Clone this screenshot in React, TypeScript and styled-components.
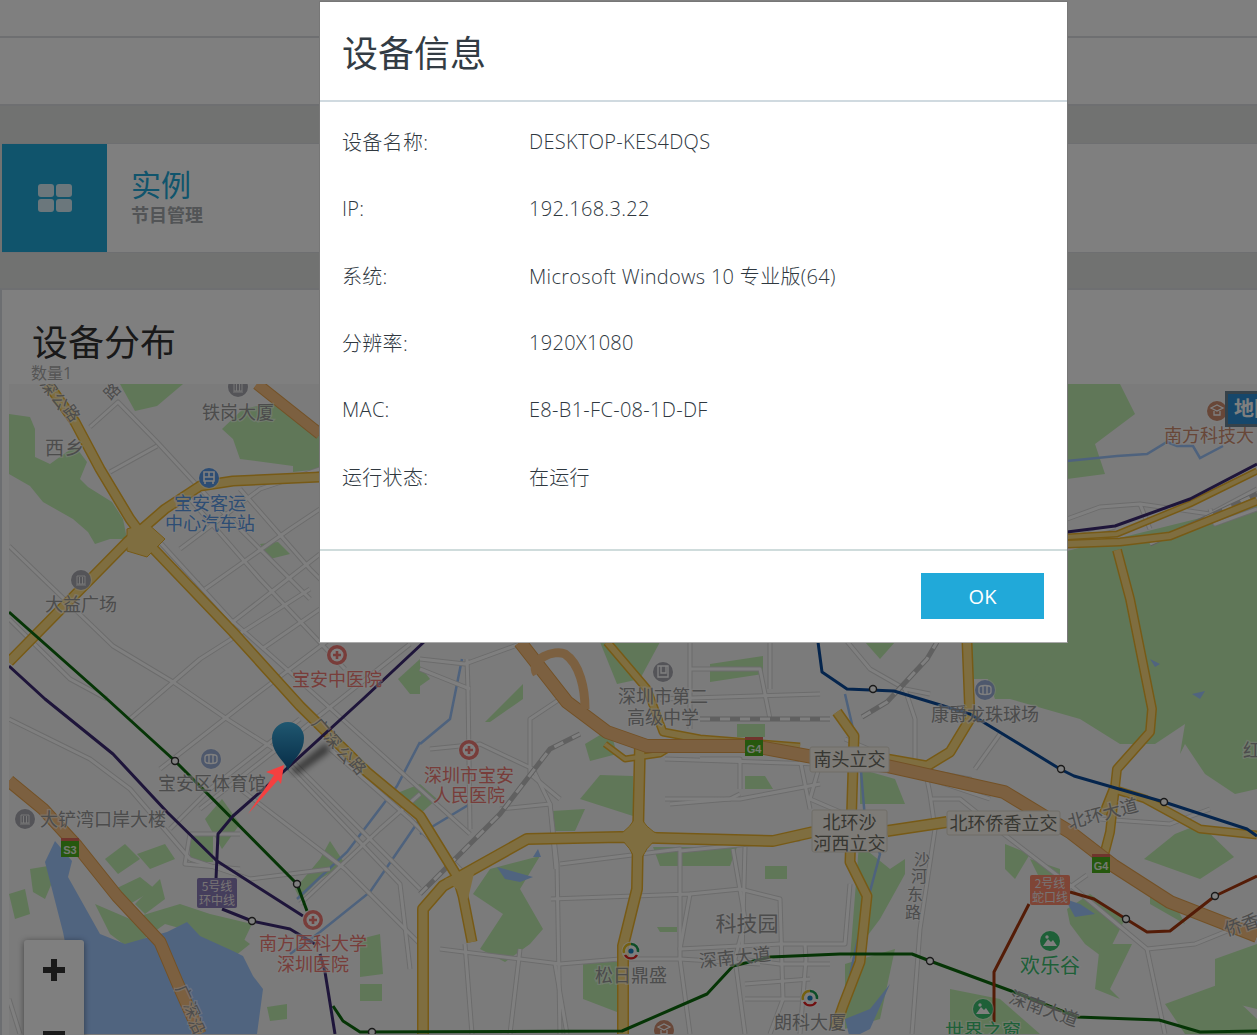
import React from "react";
import styled, { createGlobalStyle } from "styled-components";

const CJK = `"Open Sans", "Noto Sans CJK SC", sans-serif`;

const Global = createGlobalStyle`
  html, body { margin: 0; height: 1035px; overflow: hidden; background: #fff; }
  body { font-family: ${CJK}; }
`;

const Page = styled.div`
  height: 1035px;
  overflow: hidden;
  display: flex;
  flex-direction: column;
  background: #e2e5e3;
`;
const TopBar = styled.div`
  height: 36px;
  flex: none;
  background: #fff;
  border-bottom: 2px solid #dcdfe3;
`;
const NavBar = styled.div`
  height: 66px;
  flex: none;
  background: #fff;
  border-bottom: 2px solid #dcdfe3;
`;
const Band = styled.div`
  flex: none;
  padding: 37px 0;
`;
const SummaryCard = styled.div`
  margin-left: 2px;
  height: 108px;
  display: flex;
  background: #fff;
  border-top: 1px solid #dcdfe3;
  border-bottom: 1px solid #dcdfe3;
`;
const Tile = styled.div`
  width: 105px;
  flex: none;
  background: #21a9d9;
  display: flex;
  align-items: center;
  justify-content: center;
`;
const SummaryText = styled.div`
  padding: 22px 0 0 24px;
`;
const SummaryTitle = styled.div`
  font-size: 30px;
  line-height: 38px;
  color: #21a9d9;
`;
const SummarySub = styled.div`
  font-size: 18px;
  line-height: 22px;
  font-weight: 700;
  color: #a4a8ac;
`;
const Panel = styled.div`
  flex: 1;
  min-height: 0;
  margin-top: -2px;
  display: flex;
  flex-direction: column;
  background: #fff;
  border-top: 2px solid #dcdfe3;
  border-left: 2px solid #d8dde2;
`;
const PanelHead = styled.div`
  height: 94px;
  flex: none;
  padding: 33px 0 0 30px;
  box-sizing: border-box;
`;
const PanelTitle = styled.div`
  font-size: 36px;
  line-height: 40px;
  color: #333;
`;
const PanelSub = styled.div`
  font-size: 16px;
  line-height: 20px;
  margin-left: -1px;
  color: #aaa;
`;
const MapWrap = styled.div`
  position: relative;
  margin-left: 7px;
  flex: 1;
  overflow: hidden;
  background: #f6f6f6;
`;
const MapSvg = styled.svg`
  display: block;
  width: 1248px;
  height: 650px;
  font-family: "Noto Sans CJK SC", sans-serif;
`;
const ZoomControl = styled.div`
  position: absolute;
  left: 15px;
  top: 556px;
  width: 60px;
  height: 124px;
  display: flex;
  flex-direction: column;
  gap: 4px;
  background: #fff;
  border-radius: 3px;
  box-shadow: 0 1px 6px rgba(0, 0, 0, 0.45);
`;
const ZoomBtn = styled.div`
  height: 60px;
  display: flex;
  align-items: center;
  justify-content: center;
`;
const MapTag = styled.div`
  position: absolute;
  left: 1216px;
  top: 7px;
  width: 60px;
  height: 30px;
  box-sizing: content-box;
  border: 3px solid #6d8494;
  background: #2d8fd6;
  color: #fff;
  font-size: 20px;
  line-height: 30px;
  font-weight: 700;
  padding-left: 6px;
  white-space: nowrap;
`;
const Backdrop = styled.div`
  position: fixed;
  inset: 0;
  background: rgba(0, 0, 0, 0.5);
`;
const Annotation = styled.svg`
  position: fixed;
  left: 240px;
  top: 760px;
  width: 50px;
  height: 60px;
`;
const Modal = styled.div`
  position: fixed;
  left: 319px;
  top: 1px;
  width: 749px;
  height: 642px;
  box-sizing: border-box;
  background: #fff;
  border: 1px solid #777;
  border-bottom-color: #aaa;
  display: flex;
  flex-direction: column;
`;
const ModalHeader = styled.div`
  height: 98px;
  flex: none;
  padding: 0 22px;
  display: flex;
  align-items: center;
  border-bottom: 2px solid #d0dae0;
`;
const ModalTitle = styled.h3`
  margin: 0;
  font-size: 36px;
  font-weight: 400;
  color: #333c44;
`;
const ModalBody = styled.div`
  padding: 6px 22px 39px;
  border-bottom: 2px solid #cfdcdc;
`;
const InfoRow = styled.div`
  height: 67px;
  display: grid;
  grid-template-columns: 187px 1fr;
  align-items: center;
  font-size: 20px;
  font-weight: 300;
  letter-spacing: 0.3px;
  color: #2f383f;
`;
const ModalFooter = styled.div`
  padding: 22px 23px 0;
  display: flex;
  justify-content: flex-end;
`;
const OkButton = styled.button`
  width: 123px;
  height: 46px;
  border: 0;
  background: #21a9d9;
  color: #fff;
  font-family: inherit;
  font-size: 20px;
`;

type P = [number, number][];
const d = (p: P) => "M" + p.map((q) => q.join(" ")).join("L");

const greens: P[] = [
  [[9,415],[30,418],[35,430],[35,458],[50,465],[75,447],[87,463],[80,480],[88,488],[112,503],[123,520],[127,540],[110,540],[95,545],[88,533],[73,520],[43,503],[30,487],[9,475]],
  [[120,385],[183,385],[157,407],[135,412]],
  [[222,430],[243,410],[277,403],[320,430],[320,470],[293,473],[293,467],[240,460],[233,440]],
  [[260,545],[278,543],[290,555],[270,560]],
  [[193,585],[200,582],[198,590]],
  [[398,680],[420,660],[420,695],[410,695]],
  [[420,667],[430,680],[420,687]],
  [[485,723],[523,685],[523,700],[490,723]],
  [[180,930],[230,930],[250,945],[225,965],[200,948]],
  [[205,820],[222,800],[240,825],[222,850]],
  [[190,863],[213,863],[213,835],[190,835]],
  [[137,855],[165,845],[175,860],[150,870]],
  [[105,860],[125,845],[140,860],[118,875]],
  [[115,890],[140,878],[155,890],[130,905]],
  [[135,905],[160,880],[165,900],[145,915]],
  [[30,870],[60,865],[45,900],[33,893]],
  [[9,895],[25,890],[30,915],[15,920]],
  [[95,905],[130,920],[180,905],[210,915],[252,925],[240,950],[200,935],[165,925],[130,950],[110,935]],
  [[295,890],[320,860],[330,842],[345,865],[320,880],[300,900]],
  [[360,940],[380,935],[383,975],[360,978]],
  [[360,985],[382,985],[382,1002],[360,1002]],
  [[267,1008],[287,1005],[287,1020],[270,1022]],
  [[395,795],[420,785],[437,800],[420,815]],
  [[580,800],[600,776],[633,777],[633,817]],
  [[552,812],[585,810],[575,832],[552,832]],
  [[473,895],[490,870],[540,857],[520,890],[543,930],[530,945],[505,963],[480,950],[503,915]],
  [[583,963],[617,963],[617,1013],[583,1000]],
  [[585,745],[610,730],[617,755],[590,762]],
  [[600,643],[660,643],[640,680],[617,685]],
  [[710,665],[763,657],[763,675],[710,683]],
  [[737,725],[765,725],[765,738],[737,738]],
  [[745,777],[765,777],[773,790],[745,790]],
  [[765,867],[787,867],[787,880],[765,880]],
  [[653,848],[737,848],[730,867],[660,867]],
  [[657,928],[677,928],[677,933],[660,933]],
  [[865,643],[895,643],[880,660]],
  [[859,845],[890,870],[905,860],[905,875],[880,920],[850,960]],
  [[845,965],[895,950],[880,1020],[845,1030]],
  [[860,770],[895,780],[905,805],[860,805]],
  [[970,643],[1257,643],[1257,790],[1235,795],[1205,775],[1185,745],[1180,755],[1185,725],[1155,745],[1120,745],[1080,720],[1010,700],[990,680],[970,680]],
  [[975,645],[1060,643],[1020,700],[995,700]],
  [[1144,860],[1175,835],[1200,825],[1234,858],[1200,880]],
  [[1067,552],[1257,505],[1257,645],[1067,645]],
  [[1067,385],[1120,385],[1135,415],[1095,445],[1105,475],[1067,480]],
  [[1005,845],[1030,855],[1015,880],[1005,870]],
  [[1030,860],[1060,870],[1060,895],[1040,880]],
  [[1067,910],[1090,895],[1125,920],[1105,960],[1085,945],[1070,925]],
  [[1100,945],[1132,945],[1110,990],[1120,1000],[1095,990]],
  [[950,990],[1000,1000],[1040,1035],[950,1035]],
  [[1215,960],[1257,945],[1257,1010],[1215,1000]],
  [[1165,1005],[1220,985],[1257,1020],[1257,1035],[1185,1035]],
  [[1150,890],[1170,895],[1185,925],[1150,905]],
];

const waters: P[] = [
  [[45,863],[55,842],[72,862],[68,878],[100,935],[125,945],[167,933],[187,923],[200,937],[233,952],[243,957],[253,977],[263,990],[257,1035],[83,1035],[63,933]],
  [[870,1010],[890,985],[870,1030],[850,1040],[845,1020]],
  [[1065,900],[1080,905],[1095,915],[1075,918]],
  [[1150,660],[1160,665],[1155,668]],
  [[1192,695],[1205,692],[1200,700]],
  [[497,868],[533,878],[520,883],[505,880]],
  [[533,858],[538,850],[541,858]],
];

const rivers: P[] = [
  [[420,743],[397,787],[347,853],[297,900]],
  [[420,820],[370,893],[320,933],[290,955]],
  [[462,660],[450,720],[420,745]],
  [[420,835],[470,805]],
  [[845,695],[860,760],[865,820],[880,855],[860,930],[845,1000]],
  [[1067,462],[1117,457],[1147,455],[1167,443],[1177,447],[1193,447],[1200,459],[1223,447]],
];

const streets: P[] = [
  [[90,428],[118,403],[157,443],[207,497],[265,555],[310,600]],
  [[110,473],[157,447]],
  [[9,547],[113,647],[173,683],[227,720],[290,760],[340,810],[420,890]],
  [[9,620],[70,680],[107,700]],
  [[157,540],[230,620],[320,700],[420,790],[470,835]],
  [[190,500],[260,580],[345,670]],
  [[240,490],[310,570],[330,590]],
  [[180,550],[260,490],[320,470]],
  [[205,590],[290,530],[320,510]],
  [[230,625],[320,555]],
  [[262,650],[320,610]],
  [[130,720],[200,660],[310,590]],
  [[160,770],[250,700],[330,640]],
  [[200,810],[290,740],[410,645]],
  [[170,830],[210,790],[300,720]],
  [[9,720],[90,760],[130,790],[190,860],[250,880],[330,870]],
  [[240,790],[345,870],[420,945]],
  [[290,770],[400,885],[410,970]],
  [[330,750],[410,820],[470,880]],
  [[190,835],[185,865],[240,870]],
  [[190,835],[240,835]],
  [[300,905],[380,830],[420,795]],
  [[420,660],[465,665],[520,645]],
  [[467,660],[468,690],[470,830]],
  [[430,750],[480,745],[533,770],[550,805],[557,865],[560,1035]],
  [[560,700],[530,720],[530,775],[560,800]],
  [[420,670],[470,690]],
  [[500,810],[550,805],[556,870]],
  [[560,865],[680,850],[680,885],[680,960],[690,1035]],
  [[551,900],[690,895],[680,950],[780,945],[845,945],[850,885]],
  [[440,950],[560,965],[620,960],[680,960],[760,965]],
  [[465,945],[472,1035]],
  [[520,950],[510,1035]],
  [[555,965],[567,1035]],
  [[733,850],[745,920],[735,960],[745,1035]],
  [[680,852],[800,840]],
  [[745,848],[742,955]],
  [[690,895],[740,890],[780,900],[783,1000],[770,1035]],
  [[805,945],[806,960],[800,1035]],
  [[740,960],[780,965],[830,965]],
  [[745,985],[810,980]],
  [[745,1000],[800,1000]],
  [[660,700],[820,695]],
  [[690,640],[690,730]],
  [[690,670],[760,670],[770,720]],
  [[770,640],[770,690]],
  [[700,760],[740,760],[740,790]],
  [[665,760],[820,765],[810,800],[880,830]],
  [[665,800],[740,800],[820,785]],
  [[670,805],[730,800],[740,795]],
  [[800,760],[810,810]],
  [[845,640],[870,670],[905,690],[930,695]],
  [[905,690],[915,720],[915,775],[990,800]],
  [[845,740],[915,770],[970,780],[970,790],[1000,790]],
  [[925,770],[930,795],[935,830],[920,930],[912,1035]],
  [[930,800],[960,800],[1010,840],[1075,890],[1147,950],[1195,945],[1257,920]],
  [[1147,950],[1165,1035]],
  [[1087,876],[1060,895]],
  [[975,770],[1000,735]],
  [[1100,820],[1170,825],[1210,810]],
  [[1067,540],[1115,528]],
  [[1067,520],[1100,508],[1140,505],[1210,515],[1257,490]],
  [[1140,505],[1150,530]],
  [[1210,510],[1215,525],[1257,510]],
  [[9,1000],[20,1035]],
];

const railSegs: P[] = [
  [[420,895],[500,815],[550,750],[580,735]],
  [[700,720],[830,720]],
  [[862,718],[887,703],[927,660],[937,643]],
  [[1150,545],[1257,495]],
];

const highways: { p: P; w: number }[] = [
  { p: [[48,385],[75,423],[100,470],[130,520],[147,543],[233,633],[300,707],[367,773],[420,817],[457,877],[463,897],[472,943]], w: 8 },
  { p: [[9,663],[127,543],[165,510],[200,487],[233,482],[320,478]], w: 8 },
  { p: [[423,1035],[423,910],[443,887],[527,840],[620,838],[773,842],[813,833]], w: 9 },
  { p: [[887,832],[947,823]], w: 9 },
  { p: [[640,745],[638,837],[637,890],[623,947],[623,1035]], w: 9 },
  { p: [[607,643],[647,690],[663,733],[700,740],[800,748]], w: 6 },
  { p: [[967,643],[970,720],[950,753],[927,767],[887,760]], w: 8 },
  { p: [[837,713],[854,737],[850,863],[867,897],[860,963],[843,1007],[835,1030]], w: 8 },
  { p: [[1117,551],[1130,600],[1152,710],[1150,733],[1117,770],[1110,833],[1103,860]], w: 7 },
  { p: [[1103,815],[1113,790],[1145,800],[1200,830],[1257,836]], w: 6 },
  { p: [[1067,545],[1120,543],[1170,537],[1257,502]], w: 6 },
  { p: [[1067,538],[1117,535],[1190,505],[1257,472]], w: 4 },
  { p: [[1100,862],[1160,900],[1170,905]], w: 3 },
  { p: [[605,745],[625,760],[660,755],[668,750]], w: 4 },
];
const expressways: { p: P; w: number }[] = [
  { p: [[257,385],[320,435]], w: 10 },
  { p: [[9,782],[43,810],[77,847],[117,897],[160,943],[177,983],[200,1035]], w: 11 },
  { p: [[520,643],[567,703],[607,733],[647,747],[753,747],[813,758],[887,767],[1004,793],[1070,833],[1114,867],[1170,903],[1257,937]], w: 12 },
];

const lines: { p: P; c: string; w: number }[] = [
  { p: [[9,613],[107,700],[175,762],[297,885],[307,912]], c: "#0c6b0c", w: 3 },
  { p: [[333,1007],[343,1022],[360,1033],[622,1032],[707,995],[733,967],[770,958],[840,955],[912,955],[930,962],[1014,993],[1077,1018],[1159,1021],[1200,1033],[1257,1032]], c: "#0c6b0c", w: 3 },
  { p: [[9,667],[45,700],[113,755],[167,813],[217,862],[303,917]], c: "#3d2a74", w: 3 },
  { p: [[320,955],[325,973],[335,1035]], c: "#3d2a74", w: 3 },
  { p: [[425,642],[363,700],[283,773],[233,817],[218,835],[216,880]], c: "#3d2a74", w: 3 },
  { p: [[222,910],[252,922],[290,930],[315,945]], c: "#3d2a74", w: 3 },
  { p: [[1067,533],[1115,527],[1190,500],[1257,465]], c: "#3d2a74", w: 3 },
  { p: [[818,643],[822,673],[847,690],[894,692],[970,715],[1060,770],[1074,777],[1164,803],[1247,830],[1257,837]], c: "#0a4a9a", w: 3 },
  { p: [[1257,877],[1215,897],[1170,932],[1147,933],[1126,920],[1094,900],[1070,893]], c: "#a8380e", w: 3 },
  { p: [[1029,905],[994,973],[994,1023]], c: "#a8380e", w: 3 },
];

const stations: P = [[175,762],[297,885],[252,922],[372,1033],[930,962],[873,690],[1061,770],[1164,803],[1215,897],[1126,920]];

type Label = { t: string; x: number; y: number; c?: string; s?: number; r?: number; ls?: number };
const GRAY = "#989898";
const BLUE = "#5b9be8";
const RED = "#f07a74";
const GREEN = "#3cc070";
const BROWN = "#d08e70";
const labels: Label[] = [
  { t: "铁岗大厦", x: 238, y: 420 },
  { t: "西乡", x: 65, y: 456, s: 19, ls: 1 },
  { t: "宝安客运", x: 210, y: 511, c: BLUE },
  { t: "中心汽车站", x: 210, y: 531, c: BLUE },
  { t: "大益广场", x: 81, y: 612 },
  { t: "宝安中医院", x: 337, y: 687, c: RED },
  { t: "宝安区体育馆", x: 212, y: 791 },
  { t: "大铲湾口岸大楼", x: 103, y: 827 },
  { t: "南方医科大学", x: 313, y: 951, c: RED },
  { t: "深圳医院", x: 313, y: 972, c: RED },
  { t: "深圳市第二", x: 663, y: 704 },
  { t: "高级中学", x: 663, y: 725 },
  { t: "深圳市宝安", x: 469, y: 783, c: RED },
  { t: "人民医院", x: 469, y: 803, c: RED },
  { t: "康爵龙珠球场", x: 985, y: 722 },
  { t: "科技园", x: 747, y: 932, s: 21 },
  { t: "松日鼎盛", x: 631, y: 983 },
  { t: "朗科大厦", x: 810, y: 1030 },
  { t: "欢乐谷", x: 1050, y: 974, c: GREEN, s: 20 },
  { t: "世界之窗", x: 983, y: 1039, c: GREEN, s: 19 },
  { t: "南方科技大", x: 1209, y: 443, c: BROWN },
  { t: "红", x: 1252, y: 758 },
  { t: "沙", x: 922, y: 866, s: 16 },
  { t: "河", x: 919, y: 883, s: 16 },
  { t: "东", x: 915, y: 901, s: 16 },
  { t: "路", x: 913, y: 919, s: 16 },
  { t: "公", x: 60, y: 408, s: 16, r: 55 },
  { t: "路", x: 72, y: 420, s: 16, r: 55 },
  { t: "深", x: 49, y: 394, s: 16, r: 55 },
  { t: "路", x: 112, y: 398, s: 16, r: -45 },
  { t: "广", x: 321, y: 733, s: 16, r: 50 },
  { t: "深", x: 333, y: 747, s: 16, r: 50 },
  { t: "公", x: 345, y: 762, s: 16, r: 50 },
  { t: "路", x: 358, y: 773, s: 16, r: 50 },
  { t: "广", x: 184, y: 1000, s: 16, r: 65 },
  { t: "深", x: 192, y: 1017, s: 16, r: 65 },
  { t: "沿", x: 197, y: 1033, s: 16, r: 65 },
  { t: "深南大道", x: 735, y: 965, r: -6 },
  { t: "北环大道", x: 1103, y: 821, r: -15, s: 18 },
  { t: "深南大道", x: 1044, y: 1016, r: 20 },
  { t: "侨香", x: 1242, y: 932, r: -18 },
];

const boxes: { x: number; y: number; w: number; h: number; rows: string[] }[] = [
  { x: 810, y: 748, w: 79, h: 25, rows: ["南头立交"] },
  { x: 812, y: 811, w: 75, h: 42, rows: ["北环沙", "河西立交"] },
  { x: 947, y: 812, w: 113, h: 24, rows: ["北环侨香立交"] },
];

const Road = ({ list, casing, fill, w }: { list: P[]; casing: string; fill: string; w: number }) => (
  <>
    {list.map((p, i) => (
      <path key={`c${i}`} d={d(p)} fill="none" stroke={casing} strokeWidth={w + 2} strokeLinejoin="round" />
    ))}
    {list.map((p, i) => (
      <path key={`f${i}`} d={d(p)} fill="none" stroke={fill} strokeWidth={w} strokeLinejoin="round" />
    ))}
  </>
);

const Shield = ({ x, y, t }: { x: number; y: number; t: string }) => (
  <g>
    <rect x={x - 9} y={y - 8} width={18} height={16} fill="#4cb01c" />
    <rect x={x - 9} y={y - 11} width={18} height={3} fill="#e06a5a" />
    <text x={x} y={y + 5} fontSize={11} fontWeight={700} textAnchor="middle" fill="#e8f4e0" fontFamily="Liberation Sans, sans-serif">{t}</text>
  </g>
);

const Badge = ({ x, y, bg, rows }: { x: number; y: number; bg: string; rows: string[] }) => (
  <g>
    <rect x={x} y={y} width={40} height={30} rx={2} fill={bg} />
    {rows.map((r, i) => (
      <text key={r} x={x + 20} y={y + 13 + i * 14} fontSize={12} textAnchor="middle" fill="#f0e8e8">{r}</text>
    ))}
  </g>
);

const Poi = ({ x, y, c, kind, r = 10 }: { x: number; y: number; c: string; kind: string; r?: number }) => (
  <g>
    <circle cx={x} cy={y} r={r + 1} fill="#fff" opacity={0.4} />
    <circle cx={x} cy={y} r={r} fill={c} />
    {kind === "bldg" && (
      <path d={`M${x - 5} ${y + 5}H${x + 5}M${x - 4} ${y - 4}H${x + 4}V${y + 4}H${x - 4}ZM${x - 1.5} ${y - 3}V${y + 4}M${x + 1.5} ${y - 3}V${y + 4}`} stroke="#eee" strokeWidth={1} fill="none" />
    )}
    {kind === "bus" && (
      <path d={`M${x - 5} ${y - 6}H${x + 5}V${y + 3}H${x - 5}ZM${x - 5} ${y - 1}H${x + 5}M${x} ${y - 6}V${y - 1}M${x - 4} ${y + 3}V${y + 6}M${x + 4} ${y + 3}V${y + 6}`} stroke="#fff" strokeWidth={1.6} fill="none" />
    )}
    {kind === "cross" && (
      <g>
        <circle cx={x} cy={y} r={6.5} fill="#fff" />
        <path d={`M${x - 4} ${y}H${x + 4}M${x} ${y - 4}V${y + 4}`} stroke={c} strokeWidth={2.6} />
      </g>
    )}
    {kind === "stadium" && (
      <path d={`M${x - 6} ${y - 2}a6 2.5 0 0 1 12 0v4a6 2.5 0 0 1 -12 0ZM${x - 2} ${y - 5}v10M${x + 2} ${y - 5}v10`} stroke="#fff" strokeWidth={1.4} fill="none" />
    )}
    {kind === "mount" && (
      <g>
        <path d={`M${x - 7} ${y + 5}L${x - 2} ${y - 2}L${x + 1} ${y + 1}L${x + 3} ${y - 1}L${x + 7} ${y + 5}Z`} fill="#fff" />
        <circle cx={x - 3} cy={y - 4} r={1.7} fill="#fff" />
      </g>
    )}
    {kind === "school" && (
      <path d={`M${x - 6} ${y - 3}L${x} ${y - 6}L${x + 6} ${y - 3}L${x} ${y}ZM${x - 3} ${y}V${y + 4}H${x + 3}V${y}`} stroke="#fff" strokeWidth={1.3} fill="none" />
    )}
    {kind === "book" && (
      <path d={`M${x - 5} ${y - 6}H${x + 5}V${y + 5}H${x - 5}ZM${x - 2} ${y - 6}V${y + 1}H${x + 3}V${y - 6}`} stroke="#fff" strokeWidth={1.4} fill="none" />
    )}
  </g>
);

const Ring = ({ x, y }: { x: number; y: number }) => (
  <g fill="none" strokeWidth={2.4}>
    <circle cx={x} cy={y} r={9.5} fill="#fff" stroke="none" opacity={0.7} />
    <path d={`M${x - 7} ${y + 2}A7 7 0 0 1 ${x} ${y - 7}`} stroke="#e8c020" />
    <path d={`M${x} ${y - 7}A7 7 0 0 1 ${x + 7} ${y + 1}`} stroke="#1a9a50" />
    <path d={`M${x - 6} ${y + 4}A7 7 0 0 0 ${x + 6} ${y + 4}`} stroke="#e02020" />
    <circle cx={x} cy={y} r={2.6} fill="#1a80c0" stroke="none" />
  </g>
);

const CityMap = () => (
  <MapSvg viewBox="9 385 1248 650">
    <defs>
      <linearGradient id="pin" x1="0" y1="0" x2="0" y2="1">
        <stop offset="0" stopColor="#3faee0" />
        <stop offset="1" stopColor="#0e5a8e" />
      </linearGradient>
      <filter id="blur"><feGaussianBlur stdDeviation="3" /></filter>
    </defs>
    {greens.map((p, i) => <path key={i} d={d(p) + "Z"} fill="#c0eeb0" />)}
    {waters.map((p, i) => <path key={i} d={d(p) + "Z"} fill="#a0c8ff" />)}
    {rivers.map((p, i) => <path key={i} d={d(p)} fill="none" stroke="#9cc4fa" strokeWidth={2.5} />)}
    <Road list={streets} casing="#d8d8d8" fill="#fff" w={3} />
    {railSegs.map((p, i) => (
      <g key={i}>
        <path d={d(p)} fill="none" stroke="#c0c0c0" strokeWidth={5} />
        <path d={d(p)} fill="none" stroke="#fff" strokeWidth={3} strokeDasharray="10 10" />
      </g>
    ))}
    {highways.map((h, i) => (
      <path key={`hc${i}`} d={d(h.p)} fill="none" stroke="#efb52c" strokeWidth={h.w + 3} strokeLinejoin="round" />
    ))}
    <path d="M127 530L147 524L165 540L147 558L127 552Z" fill="#ffdd80" stroke="#efb52c" />
    <path d="M616 837Q632 830 638 812Q644 830 662 837Q644 846 638 870Q632 846 616 837Z" fill="#ffdd80" stroke="#efb52c" />
    <path d="M445 880L475 870L468 900Z" fill="#ffdd80" />
    {highways.map((h, i) => (
      <path key={`hf${i}`} d={d(h.p)} fill="none" stroke="#ffdd80" strokeWidth={h.w} strokeLinejoin="round" />
    ))}
    {expressways.map((h, i) => (
      <path key={`ec${i}`} d={d(h.p)} fill="none" stroke="#e6a24c" strokeWidth={h.w + 2} strokeLinejoin="round" />
    ))}
    {expressways.map((h, i) => (
      <path key={`ef${i}`} d={d(h.p)} fill="none" stroke="#f8c080" strokeWidth={h.w} strokeLinejoin="round" />
    ))}
    <path d="M537 675C528 660 555 650 565 655C580 665 585 690 585 710" fill="none" stroke="#f8c080" strokeWidth={9} />
    {lines.map((l, i) => <path key={i} d={d(l.p)} fill="none" stroke={l.c} strokeWidth={l.w} strokeLinejoin="round" />)}
    {stations.map(([x, y], i) => <circle key={i} cx={x} cy={y} r={3.5} fill="#fff" stroke="#333" strokeWidth={1.4} />)}

    <Poi x={238} y={388} c="#a8a8b0" kind="bldg" />
    <Poi x={209} y={479} c="#5a9ae8" kind="bus" />
    <Poi x={81} y={581} c="#a8a8b0" kind="bldg" />
    <Poi x={337} y={656} c="#f07a74" kind="cross" />
    <Poi x={211} y={760} c="#9cb0d8" kind="stadium" />
    <Poi x={25} y={820} c="#a8a8b0" kind="bldg" />
    <Poi x={313} y={921} c="#f07a74" kind="cross" />
    <Poi x={469} y={751} c="#f07a74" kind="cross" />
    <Poi x={663} y={673} c="#a8a8b0" kind="book" />
    <Poi x={985} y={691} c="#9cb0d8" kind="stadium" />
    <Poi x={1050} y={942} c="#3cc070" kind="mount" />
    <Poi x={983} y={1010} c="#3cc070" kind="mount" />
    <Poi x={664} y={1031} c="#d08e70" kind="school" />
    <Poi x={1217} y={412} c="#d08e70" kind="school" />
    <Ring x={631} y={952} />
    <Ring x={810} y={999} />

    <Shield x={70} y={850} t="S3" />
    <Shield x={754} y={749} t="G4" />
    <Shield x={1101} y={866} t="G4" />
    <Badge x={197} y={879} bg="#8a7cb8" rows={["5号线", "环中线"]} />
    <Badge x={1030} y={876} bg="#ff8a6c" rows={["2号线", "蛇口线"]} />

    {boxes.map((b) => (
      <g key={b.x}>
        <rect x={b.x} y={b.y} width={b.w} height={b.h} rx={2} fill="#fbf6ee" stroke="#e0dcd0" />
        {b.rows.map((r, i) => (
          <text key={r} x={b.x + b.w / 2} y={b.y + 19 + i * 21} fontSize={18} textAnchor="middle" fill="#6e6e64">{r}</text>
        ))}
      </g>
    ))}

    {labels.map((l, i) => (
      <text
        key={i}
        x={l.x}
        y={l.y}
        fontSize={l.s ?? 18}
        letterSpacing={l.ls ?? 0}
        textAnchor="middle"
        fill={l.c ?? GRAY}
        stroke="#fff"
        strokeWidth={2.5}
        strokeOpacity={0.55}
        paintOrder="stroke"
        transform={l.r ? `rotate(${l.r} ${l.x} ${l.y - 6})` : undefined}
      >
        {l.t}
      </text>
    ))}

    <path d="M290 772L326 744L330 752L298 775Z" fill="#000" opacity={0.55} filter="url(#blur)" />
    <path d="M288 772C286 762 272 756 272 739A16 16 0 0 1 304 739C304 756 290 762 288 772Z" fill="url(#pin)" />
  </MapSvg>
);

const rows: [string, string][] = [
  ["设备名称:", "DESKTOP-KES4DQS"],
  ["IP:", "192.168.3.22"],
  ["系统:", "Microsoft Windows 10 专业版(64)"],
  ["分辨率:", "1920X1080"],
  ["MAC:", "E8-B1-FC-08-1D-DF"],
  ["运行状态:", "在运行"],
];

export default function App() {
  return (
    <>
      <Global />
      <Page>
        <TopBar />
        <NavBar />
        <Band>
          <SummaryCard>
            <Tile>
              <svg width="34" height="28" viewBox="0 0 34 28" fill="#fff" style={{ opacity: 0.82 }}>
                <rect x="0" y="0" width="16" height="13" rx="3" />
                <rect x="18" y="0" width="16" height="13" rx="3" />
                <rect x="0" y="15" width="16" height="13" rx="3" />
                <rect x="18" y="15" width="16" height="13" rx="3" />
              </svg>
            </Tile>
            <SummaryText>
              <SummaryTitle>实例</SummaryTitle>
              <SummarySub>节目管理</SummarySub>
            </SummaryText>
          </SummaryCard>
        </Band>
        <Panel>
          <PanelHead>
            <PanelTitle>设备分布</PanelTitle>
            <PanelSub>数量1</PanelSub>
          </PanelHead>
          <MapWrap>
            <CityMap />
            <ZoomControl>
              <ZoomBtn>
                <svg width="22" height="22" viewBox="0 0 22 22"><path d="M8 0h6v8h8v6h-8v8H8v-8H0V8h8z" fill="#333" /></svg>
              </ZoomBtn>
              <ZoomBtn>
                <svg width="22" height="6" viewBox="0 0 22 6"><path d="M0 0h22v6H0z" fill="#333" /></svg>
              </ZoomBtn>
            </ZoomControl>
            <MapTag>地图</MapTag>
          </MapWrap>
        </Panel>
      </Page>
      <Backdrop />
      <Annotation viewBox="240 760 50 60">
        <path d="M284 765L266 772L274 775L248 814L278 780L281 784Z" fill="#f44040" />
      </Annotation>
      <Modal>
        <ModalHeader>
          <ModalTitle>设备信息</ModalTitle>
        </ModalHeader>
        <ModalBody>
          {rows.map(([k, v]) => (
            <InfoRow key={k}>
              <span>{k}</span>
              <span>{v}</span>
            </InfoRow>
          ))}
        </ModalBody>
        <ModalFooter>
          <OkButton>OK</OkButton>
        </ModalFooter>
      </Modal>
    </>
  );
}
